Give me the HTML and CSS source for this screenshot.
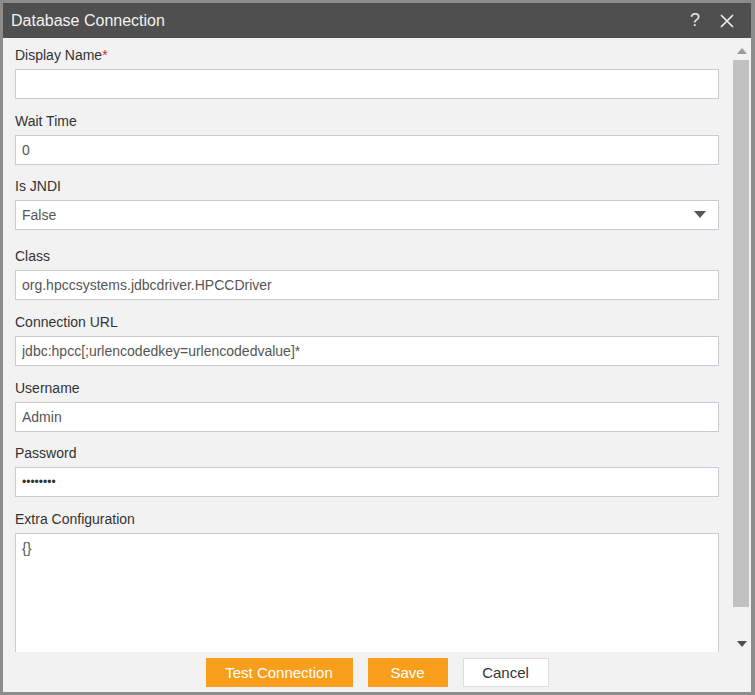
FILE: index.html
```html
<!DOCTYPE html>
<html lang="en">
<head>
    <meta charset="UTF-8">
    <meta name="viewport" content="width=device-width, initial-scale=1.0">
    <title>Database Connection</title>
    <link rel="stylesheet" href="styles.css">
</head>
<body>
    <!-- Dialog window -->
    <div class="dialog">
        <div class="title-bar">
            <span class="title">Database Connection</span>
            <span class="title-icons">
                <span class="help">?</span>
                <svg class="close" width="14" height="14" viewBox="0 0 14 14">
                    <path d="M1 1 L13 13 M13 1 L1 13" stroke="#f2f2f2" stroke-width="1.6" fill="none"/>
                </svg>
            </span>
        </div>

        <div class="dialog-body">
            <form class="form-area" action="">
                <div class="field">
                    <label>Display Name<span class="req">*</span></label>
                    <input type="text" value="">
                </div>
                <div class="field field-tight">
                    <label>Wait Time</label>
                    <input type="text" value="0">
                </div>
                <div class="field field-select">
                    <label>Is JNDI</label>
                    <div class="select">
                        <span>False</span>
                        <svg width="12" height="8" viewBox="0 0 12 8"><path d="M0 0 H12 L6 7 Z" fill="#555"/></svg>
                    </div>
                </div>
                <div class="field">
                    <label>Class</label>
                    <input type="text" value="org.hpccsystems.jdbcdriver.HPCCDriver">
                </div>
                <div class="field">
                    <label>Connection URL</label>
                    <input type="text" value="jdbc:hpcc[;urlencodedkey=urlencodedvalue]*">
                </div>
                <div class="field field-tight">
                    <label>Username</label>
                    <input type="text" value="Admin">
                </div>
                <div class="field">
                    <label>Password</label>
                    <input type="password" value="password">
                </div>
                <div class="field">
                    <label>Extra Configuration</label>
                    <textarea>{}</textarea>
                </div>
            </form>

            <!-- fake scrollbar -->
            <div class="scrollbar">
                <div class="arrow">
                    <svg width="10" height="6" viewBox="0 0 10 6"><path d="M0 6 H10 L5 0 Z" fill="#9a9a9a"/></svg>
                </div>
                <div class="track">
                    <div class="thumb"></div>
                </div>
                <div class="arrow">
                    <svg width="10" height="6" viewBox="0 0 10 6"><path d="M0 0 H10 L5 6 Z" fill="#505050"/></svg>
                </div>
            </div>
        </div>

        <div class="footer">
            <button type="button" class="btn btn-orange">Test Connection</button>
            <button type="button" class="btn btn-orange btn-save">Save</button>
            <button type="button" class="btn btn-cancel">Cancel</button>
        </div>
    </div>
</body>
</html>
```

FILE: styles.css
```css
/* Dialog styling */
body {
    margin: 0;
    font-family: "Liberation Sans", Arial, sans-serif;
    background-color: #8c8c8c;
}
.dialog {
    width: 748px;
    height: 689px;
    margin: 0;
    border-top: 3px solid #8c8c8c;
    border-left: 3px solid #8c8c8c;
    background-color: #f2f2f2;
    display: flex;
    flex-direction: column;
    overflow: hidden;
}
.title-bar {
    height: 35px;
    flex: none;
    background-color: #4f4f4f;
    color: #f2f2f2;
    display: flex;
    align-items: center;
    justify-content: space-between;
    padding: 0 17px 0 8px;
}
.title {
    font-size: 16px;
}
.title-icons {
    display: flex;
    align-items: center;
    gap: 20px;
}
.help {
    font-size: 18px;
    color: #e8e8e8;
}
.dialog-body {
    flex: 1;
    display: flex;
    min-height: 0;
    overflow: hidden;
}
.form-area {
    flex: 1;
    padding: 9px 13px 0 12px;
    overflow: hidden;
}
.field {
    display: flex;
    flex-direction: column;
    margin-bottom: 14px;
}
.field-tight {
    margin-bottom: 13px;
}
.field-select {
    margin-bottom: 18px;
}
.field label {
    font-size: 14px;
    line-height: 16px;
    color: #333;
    margin-bottom: 6px;
}
.req {
    color: #d9272e;
}
.field input,
.field textarea,
.select {
    box-sizing: border-box;
    height: 30px;
    width: 100%;
    border: 1px solid #c9cbd2;
    background-color: #fff;
    font-family: "Liberation Sans", Arial, sans-serif;
    font-size: 14px;
    color: #555;
    padding: 0 6px;
    margin: 0;
    outline: none;
}
.field input[type="password"] {
    color: #333;
    font-size: 12px;
}
.select {
    display: flex;
    align-items: center;
    justify-content: space-between;
    padding-right: 12px;
}
.field textarea {
    height: 150px;
    padding: 6px;
    resize: none;
}
.scrollbar {
    width: 19px;
    flex: none;
    display: flex;
    flex-direction: column;
    padding-top: 4px;
    box-sizing: border-box;
}
.arrow {
    height: 17px;
    display: flex;
    align-items: center;
    justify-content: center;
}
.track {
    flex: 1;
    padding: 1px 2px 0 1px;
}
.thumb {
    height: 547px;
    background-color: #c1c1c1;
}
.footer {
    height: 40px;
    flex: none;
    display: flex;
    justify-content: center;
    align-items: flex-start;
    padding-top: 6px;
    box-sizing: border-box;
    gap: 15px;
}
.btn {
    height: 29px;
    font-family: "Liberation Sans", Arial, sans-serif;
    font-size: 15px;
    border: none;
    cursor: pointer;
}
.btn-orange {
    background-color: #f89e1b;
    color: #fff;
    width: 147px;
}
.btn-save {
    width: 80px;
}
.btn-cancel {
    width: 86px;
    background-color: #fff;
    border: 1px solid #ddd;
    color: #333;
}
```
